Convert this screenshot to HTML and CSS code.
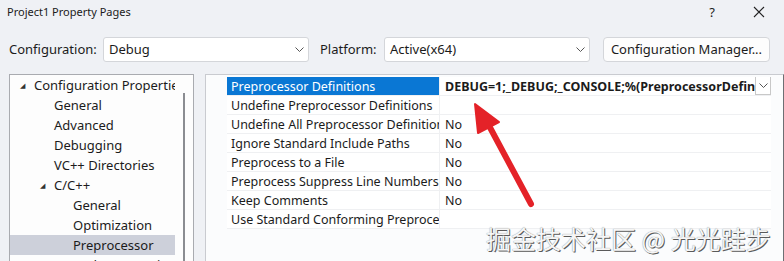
FILE: index.html
```html
<!doctype html>
<html lang="en">
<head>
  <meta charset="UTF-8" />
  <title>Project1 Property Pages</title>
  <link rel="stylesheet" href="styles.css">
</head>
<body>
  <main class="dialog">
    <header class="titlebar">
      <span class="title">Project1 Property Pages</span>
      <div class="caption-btns">
        <span class="cap help">?</span>
        <span class="cap close">
          <svg width="12" height="12" viewBox="0 0 12 12"><path d="M1 1 L11 11 M11 1 L1 11" stroke="#222" stroke-width="1.1" fill="none"/></svg>
        </span>
      </div>
    </header>

    <div class="config-row">
      <label class="lbl">Configuration:</label>
      <div class="combo cfg">
        <span>Debug</span>
        <svg class="chev" width="9" height="5" viewBox="0 0 9 5"><path d="M0.5 0.5 L4.5 4.5 L8.5 0.5" stroke="#555" fill="none"/></svg>
      </div>
      <label class="lbl plat-lbl">Platform:</label>
      <div class="combo plat">
        <span>Active(x64)</span>
        <svg class="chev" width="9" height="5" viewBox="0 0 9 5"><path d="M0.5 0.5 L4.5 4.5 L8.5 0.5" stroke="#555" fill="none"/></svg>
      </div>
      <button class="mgr-btn">Configuration Manager...</button>
    </div>

    <div class="panes">
      <aside class="tree">
        <ul class="tree-list">
          <li class="node lvl0"><span class="exp">&#9698;</span>Configuration Properties</li>
          <li class="node lvl1">General</li>
          <li class="node lvl1">Advanced</li>
          <li class="node lvl1">Debugging</li>
          <li class="node lvl1">VC++ Directories</li>
          <li class="node lvl1 has-exp"><span class="exp">&#9698;</span>C/C++</li>
          <li class="node lvl2">General</li>
          <li class="node lvl2">Optimization</li>
          <li class="node lvl2 selected">Preprocessor</li>
          <li class="node lvl2">Code Generation</li>
        </ul>
        <div class="tree-scroll"><div class="thumb"></div></div>
      </aside>

      <section class="props">
        <div class="grid">
          <div class="row active">
            <div class="name">Preprocessor Definitions</div>
            <div class="value bold">
              <span class="val-text">DEBUG=1;_DEBUG;_CONSOLE;%(PreprocessorDefin</span>
              <span class="drop">
                <svg width="9" height="5" viewBox="0 0 9 5"><path d="M0.5 0.5 L4.5 4.5 L8.5 0.5" stroke="#555" fill="none"/></svg>
              </span>
            </div>
          </div>
          <div class="row"><div class="name">Undefine Preprocessor Definitions</div><div class="value"></div></div>
          <div class="row"><div class="name">Undefine All Preprocessor Definitions</div><div class="value">No</div></div>
          <div class="row"><div class="name">Ignore Standard Include Paths</div><div class="value">No</div></div>
          <div class="row"><div class="name">Preprocess to a File</div><div class="value">No</div></div>
          <div class="row"><div class="name">Preprocess Suppress Line Numbers</div><div class="value">No</div></div>
          <div class="row"><div class="name">Keep Comments</div><div class="value">No</div></div>
          <div class="row"><div class="name">Use Standard Conforming Preprocessor</div><div class="value"></div></div>
        </div>
      </section>
    </div>

    <svg class="arrow" width="784" height="261" viewBox="0 0 784 261">
      <path d="M531 204 L486 120" stroke="#e42228" stroke-width="6" stroke-linecap="round" fill="none"/>
      <path d="M475 104 L478 133 L499 122 Z" fill="#e42228" stroke="#e42228" stroke-width="2" stroke-linejoin="round"/>
    </svg>
    <div class="watermark">掘金技术社区 @ 光光跬步</div>
  </main>
</body>
</html>
```

FILE: styles.css
```css
* { box-sizing: border-box; }

body {
  margin: 0;
  width: 784px;
  height: 261px;
  overflow: hidden;
  background: #eff1f5;
  font-family: "Noto Sans", "Open Sans", sans-serif;
  font-size: 13px;
  color: #1b1b1b;
}

.dialog {
  position: relative;
  height: 261px;
}

.titlebar {
  display: flex;
  justify-content: space-between;
  align-items: center;
  height: 23px;
  padding-left: 7px;
}

.title { font-size: 11px; }

.caption-btns {
  display: flex;
  align-items: center;
  gap: 38px;
  padding-right: 19px;
}

.cap { display: flex; align-items: center; }
.help { font-size: 13px; }

.config-row {
  display: flex;
  align-items: center;
  height: 26px;
  margin-top: 13px;
  padding-left: 9px;
}

.lbl { width: 94px; }
.plat-lbl { width: 64px; margin-left: 11px; }

.combo {
  display: flex;
  justify-content: space-between;
  align-items: center;
  height: 25px;
  width: 206px;
  padding: 0 4px 0 5px;
  background: #fff;
  border: 1px solid #d4d6da;
  border-radius: 3px;
}

.mgr-btn {
  margin-left: 13px;
  height: 25px;
  width: 167px;
  font: inherit;
  color: #1b1b1b;
  background: #fdfdfd;
  border: 1px solid #d4d6da;
  border-radius: 4px;
  padding: 0;
}

.panes {
  display: flex;
  gap: 11px;
  margin-top: 12px;
  padding-left: 9px;
}

.tree {
  display: flex;
  width: 185px;
  height: 200px;
  background: #fdfdfd;
  border: 1px solid #a9abb0;
}

.tree-list {
  list-style: none;
  margin: 0;
  padding: 0;
  flex: 1;
  min-width: 0;
}

.node {
  display: flex;
  align-items: center;
  height: 20px;
  white-space: nowrap;
  overflow: hidden;
}

.lvl0 { padding-left: 10px; }
.lvl1 { padding-left: 44px; }
.lvl1.has-exp { padding-left: 30px; }
.lvl2 { padding-left: 63px; }

.exp {
  flex: none;
  width: 14px;
  font-size: 7px;
  color: #333;
}

.selected { background: #cdd0da; }

.tree-scroll {
  flex: none;
  width: 18px;
  padding: 18px 0 0 8px;
}

.thumb {
  width: 2px;
  height: 180px;
  background: #8b8d92;
}

.props {
  flex: 1;
  height: 200px;
  background: #fbfcfd;
  border: 1px solid #c9cbd0;
  border-right: 1px solid #6d6f73;
  margin-right: 2px;
  padding: 2px 12px 0 21px;
}

.grid {
  background: #fff;
  font-size: 12.5px;
}

.row {
  display: flex;
  height: 19px;
  border-bottom: 1px solid #eff0f2;
}

.name {
  flex: none;
  width: 213px;
  padding: 1px 0 0 4px;
  line-height: 18px;
  white-space: nowrap;
  overflow: hidden;
  border-right: 1px solid #eff0f2;
}

.value {
  flex: 1;
  display: flex;
  justify-content: space-between;
  padding: 1px 0 0 5px;
  line-height: 18px;
  white-space: nowrap;
  overflow: hidden;
}

.bold { font-weight: bold; }

.active .name {
  background: #0a77d4;
  color: #fff;
}

.drop {
  display: flex;
  align-items: center;
  justify-content: center;
  width: 16px;
  height: 19px;
  margin-top: -2px;
  border: 1px solid #c8c8c8;
  background: #fff;
}

.arrow {
  position: absolute;
  left: 0;
  top: 0;
  pointer-events: none;
}

.watermark {
  position: absolute;
  left: 486px;
  top: 220px;
  font-family: "Noto Sans CJK SC", sans-serif;
  font-size: 25px;
  color: #f6f6f6;
  text-shadow: 1px 1px 0 #5a5a5a, 0 0 1px #777;
  white-space: nowrap;
}
```
